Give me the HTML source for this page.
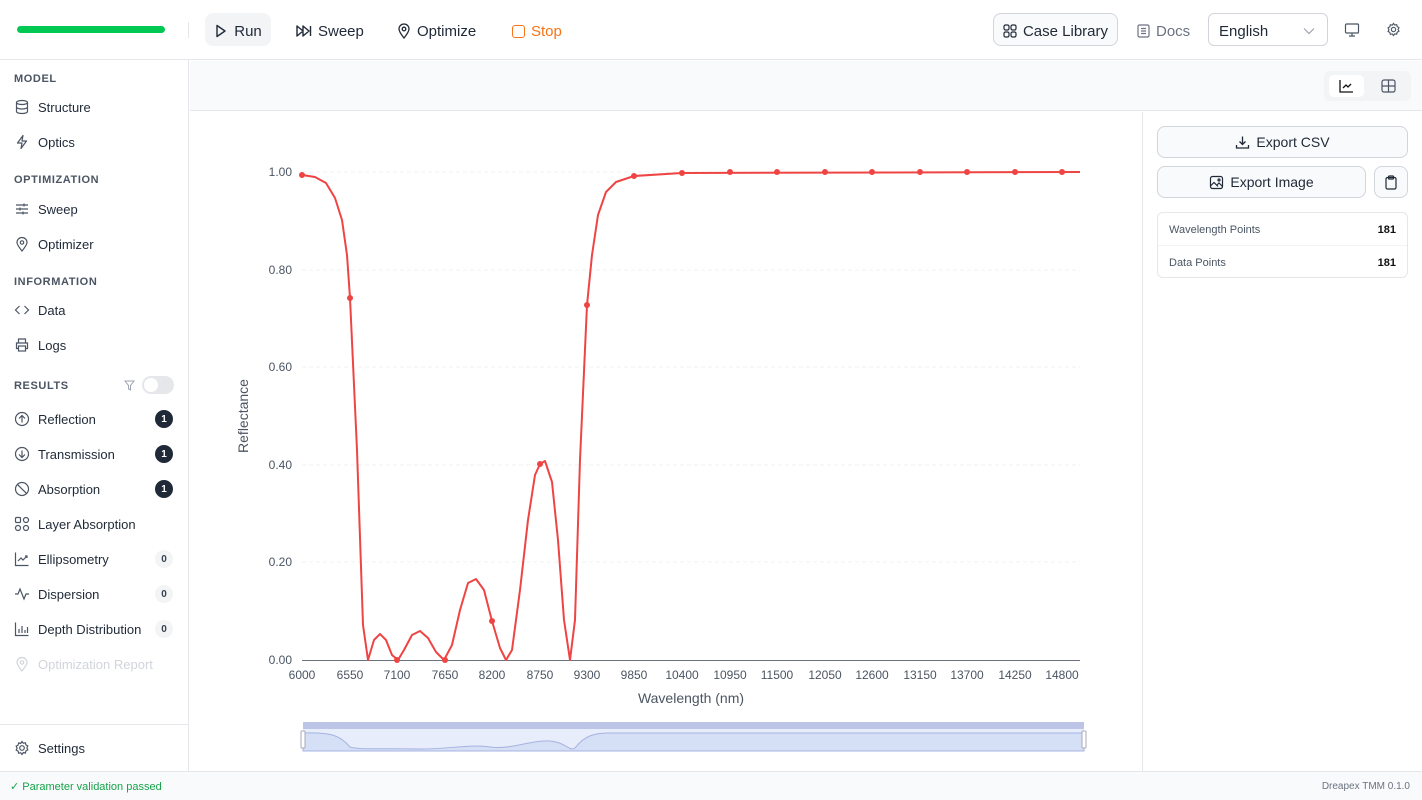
<!DOCTYPE html>
<html><head><meta charset="utf-8"><style>
*{box-sizing:border-box;margin:0;padding:0}
body{width:1422px;height:800px;overflow:hidden;font-family:"Liberation Sans",sans-serif;color:#1f2937;background:#fff;position:relative}
.top{position:absolute;left:0;top:0;width:1422px;height:60px;border-bottom:1px solid #e5e7eb;background:#fff}
.tb{position:absolute;top:13px;height:33px;display:flex;align-items:center;font-size:15px;color:#1f2937;gap:6px;padding-top:3px}
.side{position:absolute;left:0;top:60px;width:189px;height:711px;border-right:1px solid #e5e7eb}
.sec{position:absolute;left:14px;font-size:11px;font-weight:bold;letter-spacing:.6px;color:#4b5563}
.it{position:absolute;left:14px;display:flex;align-items:center;gap:8px;font-size:13px;color:#1f2937;width:160px}
.it svg{width:16px;height:16px;flex:none}
.bd{position:absolute;left:155px;width:18px;height:18px;border-radius:9px;font-size:10px;font-weight:bold;display:flex;align-items:center;justify-content:center}
.dk{background:#1f2937;color:#fff}.lt{background:#f3f4f6;color:#374151}
.foot{position:absolute;left:0;top:771px;width:1422px;height:29px;border-top:1px solid #e5e7eb;background:#f9fafb;font-size:11px}
.btn{position:absolute;border:1px solid #d1d5db;border-radius:8px;background:#f9fafb;display:flex;align-items:center;justify-content:center;gap:6px;font-size:14px;color:#1f2937}
</style></head><body>
<div class="top">
 <div style="position:absolute;left:17px;top:26px;width:148px;height:7px;border-radius:4px;background:#00c853"></div>
 <div style="position:absolute;left:188px;top:22px;width:1px;height:16px;background:#e5e7eb"></div>
 <div class="tb" style="left:205px;width:66px;background:#f3f4f6;border-radius:8px;justify-content:center"><svg width="14" height="14" viewBox="0 0 14 14"><path d="M3 1.5 L11 7 L3 12.5Z" fill="none" stroke="#1f2937" stroke-width="1.4" stroke-linejoin="round"/></svg>Run</div>
 <div class="tb" style="left:296px"><svg width="16" height="14" viewBox="0 0 16 14"><path d="M1 2L7 7L1 12ZM7 2L13 7L7 12ZM14.5 2V12" fill="none" stroke="#1f2937" stroke-width="1.4" stroke-linejoin="round"/></svg>Sweep</div>
 <div class="tb" style="left:397px"><svg width="14" height="16" viewBox="0 0 14 16"><path d="M7 15C3 10 2 8 2 6A5 5 0 0 1 12 6C12 8 11 10 7 15Z" fill="none" stroke="#1f2937" stroke-width="1.3"/><circle cx="7" cy="6" r="1.8" fill="none" stroke="#1f2937" stroke-width="1.3"/></svg>Optimize</div>
 <div class="tb" style="left:512px;color:#f97316"><span style="width:13px;height:13px;border:1.5px solid #f97316;border-radius:3px;display:inline-block"></span>Stop</div>
 <div class="tb" style="left:993px;width:125px;border:1px solid #d1d5db;border-radius:8px;background:#f9fafb;justify-content:center;top:13px;height:33px"><svg width="14" height="14" viewBox="0 0 14 14" fill="none" stroke="#1f2937" stroke-width="1.2"><rect x="1" y="1" width="5" height="5" rx="1.5"/><rect x="8" y="1" width="5" height="5" rx="1.5"/><rect x="1" y="8" width="5" height="5" rx="1.5"/><rect x="8" y="8" width="5" height="5" rx="1.5"/></svg>Case Library</div>
 <div class="tb" style="left:1137px;color:#6b7280"><svg width="13" height="14" viewBox="0 0 13 14" fill="none" stroke="#6b7280" stroke-width="1.2"><rect x="1" y="1" width="11" height="12" rx="1.5"/><path d="M4 4.5H9M4 7H9M4 9.5H9"/></svg>Docs</div>
 <div class="tb" style="left:1208px;width:120px;border:1px solid #d1d5db;border-radius:6px;padding-left:10px;top:13px;height:33px">English<svg style="position:absolute;right:12px" width="12" height="8" viewBox="0 0 12 8"><path d="M1 1.5L6 6.5L11 1.5" fill="none" stroke="#9ca3af" stroke-width="1.2"/></svg></div>
 <svg style="position:absolute;left:1344px;top:22px" width="16" height="16" viewBox="0 0 16 16" fill="none" stroke="#4b5563" stroke-width="1.2"><rect x="1.5" y="2" width="13" height="9" rx="1"/><path d="M8 11V14M5 14H11"/></svg>
 <svg style="position:absolute;left:1386px;top:22px" width="15" height="15" viewBox="0 0 16 16" fill="none" stroke="#4b5563" stroke-width="1.2"><circle cx="8" cy="8" r="2.3"/><path d="M8 1.5l1.3 1.7 2.1-.4.5 2.1 1.9 1-.9 2 .9 2-1.9 1-.5 2.1-2.1-.4L8 14.5l-1.3-1.7-2.1.4-.5-2.1-1.9-1 .9-2-.9-2 1.9-1 .5-2.1 2.1.4Z"/></svg>
</div>
<div class="side">
 <div class="sec" style="top:13px">MODEL</div>
 <div class="it" style="top:39px"><svg viewBox="0 0 16 16" fill="none" stroke="#4b5563" stroke-width="1.2"><ellipse cx="8" cy="3.5" rx="5.5" ry="2"/><path d="M2.5 3.5V12.5C2.5 13.6 5 14.5 8 14.5S13.5 13.6 13.5 12.5V3.5M2.5 8C2.5 9.1 5 10 8 10S13.5 9.1 13.5 8"/></svg>Structure</div>
 <div class="it" style="top:74px"><svg viewBox="0 0 16 16" fill="none" stroke="#4b5563" stroke-width="1.2" stroke-linejoin="round"><path d="M9 1.5L3.5 9H8L7 14.5L12.5 7H8Z"/></svg>Optics</div>
 <div class="sec" style="top:114px">OPTIMIZATION</div>
 <div class="it" style="top:141px"><svg viewBox="0 0 16 16" fill="none" stroke="#4b5563" stroke-width="1.2"><path d="M2 4H14M2 8H14M2 12H14M10 2.5V5.5M6 6.5V9.5M9 10.5V13.5"/></svg>Sweep</div>
 <div class="it" style="top:176px"><svg viewBox="0 0 16 16" fill="none" stroke="#4b5563" stroke-width="1.2"><path d="M8 15C4 10 3 8 3 6.5A5 5 0 0 1 13 6.5C13 8 12 10 8 15Z"/><circle cx="8" cy="6.5" r="1.7"/></svg>Optimizer</div>
 <div class="sec" style="top:216px">INFORMATION</div>
 <div class="it" style="top:242px"><svg viewBox="0 0 16 16" fill="none" stroke="#4b5563" stroke-width="1.2"><path d="M5.5 4L1.5 8L5.5 12M10.5 4L14.5 8L10.5 12"/></svg>Data</div>
 <div class="it" style="top:277px"><svg viewBox="0 0 16 16" fill="none" stroke="#4b5563" stroke-width="1.2"><path d="M4.5 6V2H11.5V6M4.5 11.5H2.5V6H13.5V11.5H11.5"/><rect x="4.5" y="9" width="7" height="5"/></svg>Logs</div>
 <div class="sec" style="top:320px">RESULTS</div>
 <svg style="position:absolute;left:124px;top:320px" width="11" height="11" viewBox="0 0 11 11" fill="none" stroke="#9ca3af" stroke-width="1"><path d="M1 1H10L6.5 5.5V10L4.5 9V5.5Z"/></svg>
 <div style="position:absolute;left:142px;top:316px;width:32px;height:18px;border-radius:9px;background:#e5e7eb"><div style="position:absolute;left:2px;top:2px;width:14px;height:14px;border-radius:7px;background:#fff"></div></div>
 <div class="it" style="top:351px"><svg viewBox="0 0 16 16" fill="none" stroke="#4b5563" stroke-width="1.2"><circle cx="8" cy="8" r="6.5"/><path d="M8 11.5V4.5M5 7.5L8 4.5L11 7.5"/></svg>Reflection</div><div class="bd dk" style="top:350px">1</div>
 <div class="it" style="top:386px"><svg viewBox="0 0 16 16" fill="none" stroke="#4b5563" stroke-width="1.2"><circle cx="8" cy="8" r="6.5"/><path d="M8 4.5V11.5M5 8.5L8 11.5L11 8.5"/></svg>Transmission</div><div class="bd dk" style="top:385px">1</div>
 <div class="it" style="top:421px"><svg viewBox="0 0 16 16" fill="none" stroke="#4b5563" stroke-width="1.2"><circle cx="8" cy="8" r="6.5"/><path d="M3.4 3.4L12.6 12.6"/></svg>Absorption</div><div class="bd dk" style="top:420px">1</div>
 <div class="it" style="top:456px"><svg viewBox="0 0 16 16" fill="none" stroke="#4b5563" stroke-width="1.2"><rect x="1.5" y="1.5" width="5" height="5" rx="1"/><rect x="9.5" y="1.5" width="5" height="5" rx="2.5"/><rect x="1.5" y="9.5" width="5" height="5" rx="2.5"/><rect x="9.5" y="9.5" width="5" height="5" rx="2.5"/></svg>Layer Absorption</div>
 <div class="it" style="top:491px"><svg viewBox="0 0 16 16" fill="none" stroke="#4b5563" stroke-width="1.2"><path d="M1.5 1.5V14.5H14.5M4 10L7 7L9 9L13 5M11 5H13V7"/></svg>Ellipsometry</div><div class="bd lt" style="top:490px">0</div>
 <div class="it" style="top:526px"><svg viewBox="0 0 16 16" fill="none" stroke="#4b5563" stroke-width="1.2"><path d="M1 8H4L6 3L10 13L12 8H15"/></svg>Dispersion</div><div class="bd lt" style="top:525px">0</div>
 <div class="it" style="top:561px"><svg viewBox="0 0 16 16" fill="none" stroke="#4b5563" stroke-width="1.2"><path d="M1.5 1.5V14.5H14.5M5 12V8M8 12V5M11 12V9M13.5 12V6"/></svg>Depth Distribution</div><div class="bd lt" style="top:560px">0</div>
 <div class="it" style="top:596px;color:#d1d5db"><svg viewBox="0 0 16 16" fill="none" stroke="#d1d5db" stroke-width="1.2"><path d="M8 15C4 10 3 8 3 6.5A5 5 0 0 1 13 6.5C13 8 12 10 8 15Z"/><circle cx="8" cy="6.5" r="1.7"/></svg>Optimization Report</div>
 <div style="position:absolute;left:0;top:664px;width:189px;height:1px;background:#e5e7eb"></div>
 <div class="it" style="top:680px"><svg viewBox="0 0 16 16" fill="none" stroke="#4b5563" stroke-width="1.2"><circle cx="8" cy="8" r="2.3"/><path d="M8 1.5l1.3 1.7 2.1-.4.5 2.1 1.9 1-.9 2 .9 2-1.9 1-.5 2.1-2.1-.4L8 14.5l-1.3-1.7-2.1.4-.5-2.1-1.9-1 .9-2-.9-2 1.9-1 .5-2.1 2.1.4Z"/></svg>Settings</div>
</div>
<div style="position:absolute;left:190px;top:61px;width:1232px;height:50px;background:#f9fafb;border-bottom:1px solid #e5e7eb">
 <div style="position:absolute;left:1134px;top:10px;width:87px;height:30px;border-radius:6px;background:#f3f4f6"></div>
 <div style="position:absolute;left:1139px;top:14px;width:35px;height:22px;border-radius:5px;background:#fff"></div>
 <svg style="position:absolute;left:1149px;top:18px" width="15" height="14" viewBox="0 0 15 14" fill="none" stroke="#111" stroke-width="1.3"><path d="M1 1V13H14M4 9L7 6L9 8L12 5"/></svg>
 <svg style="position:absolute;left:1191px;top:18px" width="15" height="14" viewBox="0 0 15 14" fill="none" stroke="#4b5563" stroke-width="1.2"><rect x="1" y="1" width="13" height="12" rx="2"/><path d="M7.5 1V13M1 7H14"/></svg>
</div>
<div style="position:absolute;left:1142px;top:112px;width:1px;height:659px;background:#e5e7eb"></div>
<div class="btn" style="left:1157px;top:126px;width:251px;height:32px"><svg width="15" height="15" viewBox="0 0 15 15" fill="none" stroke="#1f2937" stroke-width="1.3"><path d="M7.5 1.5V9.5M4.5 6.5L7.5 9.5L10.5 6.5M1.5 10V13H13.5V10"/></svg>Export CSV</div>
<div class="btn" style="left:1157px;top:166px;width:209px;height:32px"><svg width="15" height="15" viewBox="0 0 15 15" fill="none" stroke="#1f2937" stroke-width="1.2"><rect x="1.5" y="1.5" width="12" height="12" rx="2"/><path d="M1.5 11L5 7.5L9 11.5M8 10L10 8L13.5 11.5"/><circle cx="10" cy="5" r="1"/></svg>Export Image</div>
<div class="btn" style="left:1374px;top:166px;width:34px;height:32px"><svg width="12" height="15" viewBox="0 0 12 15" fill="none" stroke="#1f2937" stroke-width="1.2"><rect x="1" y="2.5" width="10" height="11.5" rx="1.5"/><rect x="3.5" y="1" width="5" height="3" rx=".8"/></svg></div>
<div style="position:absolute;left:1157px;top:212px;width:251px;height:66px;border:1px solid #e5e7eb;border-radius:6px;font-size:11px;color:#4b5563">
 <div style="position:absolute;left:11px;top:11px">Wavelength Points</div><div style="position:absolute;right:11px;top:11px;font-weight:bold;color:#111">181</div>
 <div style="position:absolute;left:0;top:32px;width:100%;height:1px;background:#f3f4f6"></div>
 <div style="position:absolute;left:11px;top:44px">Data Points</div><div style="position:absolute;right:11px;top:44px;font-weight:bold;color:#111">181</div>
</div>
<svg style="position:absolute;left:0;top:0" width="1142" height="771" font-family="Liberation Sans, sans-serif" font-size="12" fill="#4b5563">
 <g stroke="#f0f0f0" stroke-dasharray="4 3"><path d="M302 172H1080M302 270H1080M302 367H1080M302 465H1080M302 562H1080"/></g>
 <path d="M302 660.5H1080" stroke="#6b7280"/>
 <g text-anchor="end"><text x="292" y="176">1.00</text><text x="292" y="274">0.80</text><text x="292" y="371">0.60</text><text x="292" y="469">0.40</text><text x="292" y="566">0.20</text><text x="292" y="664">0.00</text></g>
 <g text-anchor="middle"><text x="302" y="679">6000</text><text x="350" y="679">6550</text><text x="397" y="679">7100</text><text x="445" y="679">7650</text><text x="492" y="679">8200</text><text x="540" y="679">8750</text><text x="587" y="679">9300</text><text x="634" y="679">9850</text><text x="682" y="679">10400</text><text x="730" y="679">10950</text><text x="777" y="679">11500</text><text x="825" y="679">12050</text><text x="872" y="679">12600</text><text x="920" y="679">13150</text><text x="967" y="679">13700</text><text x="1015" y="679">14250</text><text x="1062" y="679">14800</text>
 <text x="691" y="703" font-size="14">Wavelength (nm)</text>
 <text x="248" y="416" font-size="14" transform="rotate(-90 248 416)">Reflectance</text></g>
 <polyline fill="none" stroke="#ef4444" stroke-width="2" stroke-linejoin="round" points="302,175 315,177 326,183 335,198 342,220 347,255 350,298 357,450 363,625 368,660 374,640 380,634 386,640 392,655 398,660 404,650 412,635 420,631 428,638 436,652 444,660 452,645 460,610 468,583 476,579 484,590 492,621 500,648 506,660 512,650 520,590 528,520 535,475 540,464 545,461 552,482 558,540 564,620 570,660 575,620 580,460 587,305 592,255 598,215 606,192 616,182 634,176 682,173 1080,172"/>
 <g fill="#ef4444"><circle cx="302" cy="175" r="3"/><circle cx="350" cy="298" r="3"/><circle cx="397" cy="660" r="3"/><circle cx="445" cy="660" r="3"/><circle cx="492" cy="621" r="3"/><circle cx="540" cy="464" r="3"/><circle cx="587" cy="305" r="3"/><circle cx="634" cy="176" r="3"/><circle cx="682" cy="173" r="3"/><circle cx="730" cy="172" r="3"/><circle cx="777" cy="172" r="3"/><circle cx="825" cy="172" r="3"/><circle cx="872" cy="172" r="3"/><circle cx="920" cy="172" r="3"/><circle cx="967" cy="172" r="3"/><circle cx="1015" cy="172" r="3"/><circle cx="1062" cy="172" r="3"/></g>
 <rect x="303" y="722" width="781" height="7" fill="#bcc5e6"/>
 <rect x="303" y="729" width="781" height="22" fill="#e8edfb"/>
 <path d="M303 733C330 732 340 735 350 747C360 750 380 748 420 749C450 749 470 744 490 747C510 750 530 740 550 741C565 742 570 752 575 748C585 735 595 733 610 733L1084 733V751H303Z" fill="#d5dff6" stroke="#a6b3e0"/>
 <rect x="301" y="731" width="4" height="17" rx="1" fill="#fff" stroke="#aab"/><rect x="1082" y="731" width="4" height="17" rx="1" fill="#fff" stroke="#aab"/>
</svg>
<div class="foot"><span style="position:absolute;left:10px;top:8px;color:#16a34a">✓ Parameter validation passed</span><span style="position:absolute;right:12px;top:9px;color:#6b7280;font-size:10px">Dreapex TMM 0.1.0</span></div>
</body></html>
